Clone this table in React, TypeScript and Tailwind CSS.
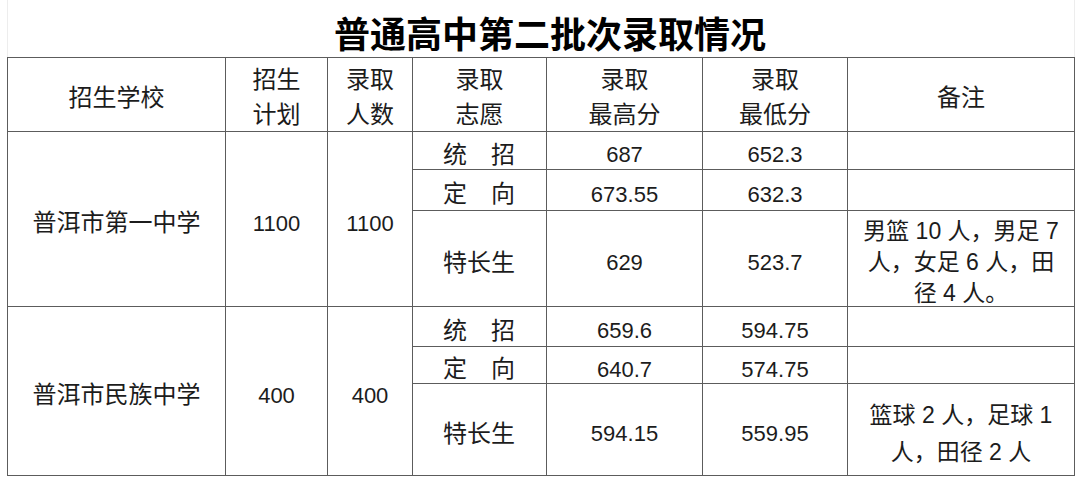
const cell = "flex items-center justify-center border-r border-b border-[#5c5c5c] text-center";
const body = `${cell} pt-[8px]`;

interface Row {
  type: string;
  high: string;
  low: string;
  note?: string[];
  noteLeading?: string;
}

interface School {
  name: string;
  plan: string;
  admitted: string;
  rows: Row[];
}

const schools: School[] = [
  {
    name: "普洱市第一中学",
    plan: "1100",
    admitted: "1100",
    rows: [
      { type: "统\u3000招", high: "687", low: "652.3" },
      { type: "定\u3000向", high: "673.55", low: "632.3" },
      {
        type: "特长生",
        high: "629",
        low: "523.7",
        note: ["男篮 10 人，男足 7", "人，女足 6 人，田", "径 4 人。"],
        noteLeading: "leading-[31px]",
      },
    ],
  },
  {
    name: "普洱市民族中学",
    plan: "400",
    admitted: "400",
    rows: [
      { type: "统\u3000招", high: "659.6", low: "594.75" },
      { type: "定\u3000向", high: "640.7", low: "574.75" },
      {
        type: "特长生",
        high: "594.15",
        low: "559.95",
        note: ["篮球 2 人，足球 1", "人，田径 2 人"],
        noteLeading: "leading-[37px]",
      },
    ],
  },
];

function HeaderCell({ lines }: { lines: string[] }) {
  return (
    <div className={`${cell} flex-col text-[24px] leading-[35px] pt-[5px]`}>
      {lines.map((l) => (
        <span key={l}>{l}</span>
      ))}
    </div>
  );
}

export default function App() {
  return (
    <div className="w-[1080px] h-[483px] bg-white text-[#1c1c1c] font-['Liberation_Sans','Noto_Sans_CJK_SC',sans-serif]">
      <div className="ml-[7px] w-[1068px] h-[57px] border-l border-r border-[#ededed] flex items-end justify-center pl-[18px]">
        <h1 className="text-[36px] font-bold leading-[40px] pb-[1px] text-black">普通高中第二批次录取情况</h1>
      </div>
      <div className="ml-[7px] w-[1068px] border-t border-l border-[#5c5c5c] grid grid-cols-[218px_102px_85px_134px_156px_145px_227px] grid-rows-[74px_38px_41px_96px_40px_37px_92px]">
        <HeaderCell lines={["招生学校"]} />
        <HeaderCell lines={["招生", "计划"]} />
        <HeaderCell lines={["录取", "人数"]} />
        <HeaderCell lines={["录取", "志愿"]} />
        <HeaderCell lines={["录取", "最高分"]} />
        <HeaderCell lines={["录取", "最低分"]} />
        <HeaderCell lines={["备注"]} />

        {schools.map((s) => (
          <>
            <div key={s.name} className={`${body} row-span-3 text-[24px]`}>{s.name}</div>
            <div className={`${body} row-span-3 text-[22px]`}>{s.plan}</div>
            <div className={`${body} row-span-3 text-[22px]`}>{s.admitted}</div>
            {s.rows.map((r) => (
              <>
                <div className={`${body} justify-start pl-[30px] text-[24px]`}>{r.type}</div>
                <div className={`${body} text-[22px]`}>{r.high}</div>
                <div className={`${body} text-[22px]`}>{r.low}</div>
                <div className={`${body} flex-col text-[23px] ${r.noteLeading ?? ""}`}>
                  {r.note?.map((n) => (
                    <span key={n}>{n}</span>
                  ))}
                </div>
              </>
            ))}
          </>
        ))}
      </div>
    </div>
  );
}
